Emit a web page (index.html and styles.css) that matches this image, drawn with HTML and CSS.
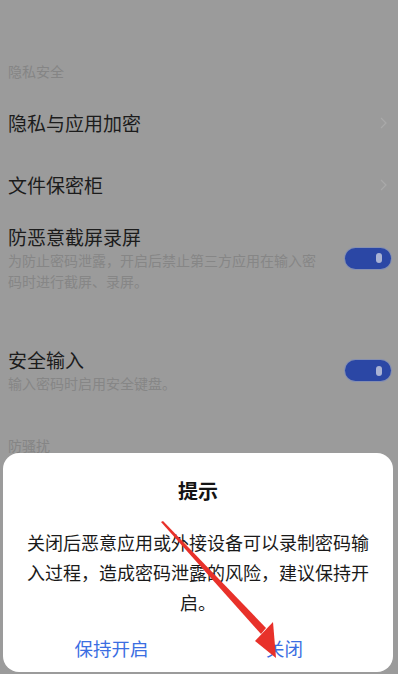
FILE: index.html
```html
<!DOCTYPE html>
<html lang="zh-CN">
<head>
<meta charset="utf-8">
<title>提示</title>
<link rel="stylesheet" href="styles.css">
</head>
<body>
<div class="screen">
  <div class="list">
    <div class="section-header first">隐私安全</div>
    <div class="row link">
      <span class="row-title">隐私与应用加密</span>
      <svg class="chevron" width="7" height="12" viewBox="0 0 7 12"><path d="M1 1 L6 6 L1 11" fill="none" stroke="#a9a9a9" stroke-width="1.3"/></svg>
    </div>
    <div class="row link">
      <span class="row-title">文件保密柜</span>
      <svg class="chevron" width="7" height="12" viewBox="0 0 7 12"><path d="M1 1 L6 6 L1 11" fill="none" stroke="#a9a9a9" stroke-width="1.3"/></svg>
    </div>
    <div class="row switch-row r1">
      <div class="row-text">
        <div class="row-title tight">防恶意截屏录屏</div>
        <div class="row-sub">为防止密码泄露，开启后禁止第三方应用在输入密码时进行截屏、录屏。</div>
      </div>
      <div class="toggle"><span class="knob"></span></div>
    </div>
    <div class="row switch-row r2">
      <div class="row-text">
        <div class="row-title tight">安全输入</div>
        <div class="row-sub">输入密码时启用安全键盘。</div>
      </div>
      <div class="toggle"><span class="knob"></span></div>
    </div>
    <div class="section-header">防骚扰</div>
  </div>

  <div class="dialog">
    <div class="dialog-title">提示</div>
    <div class="dialog-body">关闭后恶意应用或外接设备可以录制密码输入过程，造成密码泄露的风险，建议保持开启。</div>
    <div class="dialog-actions">
      <span class="action">保持开启</span>
      <span class="action">关闭</span>
    </div>
  </div>

  <svg class="annot" width="398" height="674" viewBox="0 0 398 674">
    <polygon points="161,522 163,521 266,628 261,634" fill="#e8312a"/>
    <polygon points="255,641 273,622 276,658" fill="#e8312a"/>
  </svg>
</div>
</body>
</html>
```

FILE: styles.css
```css
html, body {
  margin: 0;
  padding: 0;
}
body {
  width: 398px;
  height: 674px;
  overflow: hidden;
  background: #9b9b9b;
  font-family: "Noto Sans CJK SC", "Noto Sans", sans-serif;
}
.screen {
  position: relative;
  width: 398px;
  height: 674px;
  overflow: hidden;
}
.list {
  display: flex;
  flex-direction: column;
  padding: 0 7px 0 8px;
}
.section-header {
  font-size: 14px;
  line-height: 20px;
  color: #858585;
}
.section-header.first {
  padding-top: 61px;
  padding-bottom: 11px;
}
.row {
  display: flex;
  align-items: center;
  justify-content: space-between;
}
.row.link {
  height: 62px;
}
.row-title {
  font-size: 19px;
  color: #1c1c1c;
  line-height: 26px;
}
.chevron {
  margin-right: 4px;
}
.switch-row {
  gap: 20px;
}
.switch-row.r1 {
  padding-top: 8px;
  margin-bottom: 55px;
}
.switch-row.r2 {
  margin-bottom: 41px;
}
.row-text {
  flex: 1;
  min-width: 0;
}
.row-sub {
  font-size: 14px;
  line-height: 21px;
  color: #868686;
}
.toggle {
  width: 46px;
  height: 21px;
  border-radius: 11px;
  background: #2b47a5;
  box-shadow: 0 0 0 1px #8690b0;
  display: flex;
  align-items: center;
  justify-content: flex-end;
  padding-right: 9px;
  box-sizing: border-box;
  flex: none;
}
.knob {
  width: 6px;
  height: 10px;
  border-radius: 3px;
  background: #aab3d4;
}
.dialog {
  position: absolute;
  left: 3px;
  right: 5px;
  top: 453px;
  bottom: 2px;
  background: #ffffff;
  border-radius: 16px;
  display: flex;
  flex-direction: column;
  align-items: center;
}
.dialog-title {
  padding-top: 24px;
  font-size: 20px;
  line-height: 28px;
  font-weight: bold;
  color: #141414;
}
.dialog-body {
  margin-top: 22px;
  padding: 0 22px;
  font-size: 18px;
  line-height: 30px;
  color: #1a1a1a;
  text-align: center;
}
.dialog-actions {
  margin-top: 7px;
  width: 100%;
  box-sizing: border-box;
  padding: 0 22px;
  display: grid;
  grid-template-columns: 1fr 1fr;
  height: 48px;
  align-items: center;
}
.action {
  text-align: center;
  font-size: 18.5px;
  line-height: 28px;
  color: #3b6ee2;
}
.annot {
  position: absolute;
  left: 0;
  top: 0;
  pointer-events: none;
}
```
